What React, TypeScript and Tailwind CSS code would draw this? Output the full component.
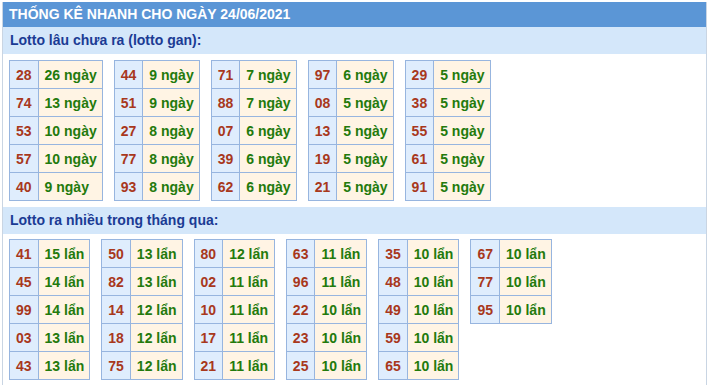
import React from 'react';

const GAN: [string, number][][] = [
  [['28', 26], ['74', 13], ['53', 10], ['57', 10], ['40', 9]],
  [['44', 9], ['51', 9], ['27', 8], ['77', 8], ['93', 8]],
  [['71', 7], ['88', 7], ['07', 6], ['39', 6], ['62', 6]],
  [['97', 6], ['08', 5], ['13', 5], ['19', 5], ['21', 5]],
  [['29', 5], ['38', 5], ['55', 5], ['61', 5], ['91', 5]],
];

const NHIEU: [string, number][][] = [
  [['41', 15], ['45', 14], ['99', 14], ['03', 13], ['43', 13]],
  [['50', 13], ['82', 13], ['14', 12], ['18', 12], ['75', 12]],
  [['80', 12], ['02', 11], ['10', 11], ['17', 11], ['21', 11]],
  [['63', 11], ['96', 11], ['22', 10], ['23', 10], ['25', 10]],
  [['35', 10], ['48', 10], ['49', 10], ['59', 10], ['65', 10]],
  [['67', 10], ['77', 10], ['95', 10]],
];

const LotoTable = ({ rows, unit }: { rows: [string, number][]; unit: string }) => (
  <table className="border-collapse self-start">
    <tbody>
      {rows.map(([so, n]) => (
        <tr key={so} className="h-[28px]">
          <td className="border border-[#97b5df] bg-[#dfedfd] px-[6px] py-0 text-[#a8381c]">{so}</td>
          <td className="border border-[#97b5df] bg-[#fff4e4] pl-[6px] pr-[5px] py-0 text-[#237a0c]">
            {n} {unit}
          </td>
        </tr>
      ))}
    </tbody>
  </table>
);

const SubTitle = ({ children }: { children: React.ReactNode }) => (
  <div className="h-[27px] bg-[#d4e7fa] pl-[7px] text-[14px] leading-[27px] font-bold text-[#1b3b94]">{children}</div>
);

export default function App() {
  return (
    <div className="w-[710px] h-[385px] overflow-hidden bg-white pl-[2px] pt-[2px] font-['Liberation_Sans',Arial,sans-serif]">
      <div className="w-[705px] min-h-[400px] border-x border-[#c9d5e3]">
        <div className="h-[25px] bg-[#5b96d6] pl-[6px] text-[14px] leading-[25px] font-bold text-white">
          THỐNG KÊ NHANH CHO NGÀY 24/06/2021
        </div>
        <SubTitle>Lotto lâu chưa ra (lotto gan):</SubTitle>
        <div className="flex gap-x-[11px] pl-[6px] pt-[6px] pb-[6px] text-[14px] font-bold leading-[16px]">
          {GAN.map((t, i) => (
            <LotoTable key={i} rows={t} unit="ngày" />
          ))}
        </div>
        <SubTitle>Lotto ra nhiều trong tháng qua:</SubTitle>
        <div className="flex gap-x-[11px] pl-[6px] pt-[5px] text-[14px] font-bold leading-[16px]">
          {NHIEU.map((t, i) => (
            <LotoTable key={i} rows={t} unit="lẩn" />
          ))}
        </div>
      </div>
    </div>
  );
}
